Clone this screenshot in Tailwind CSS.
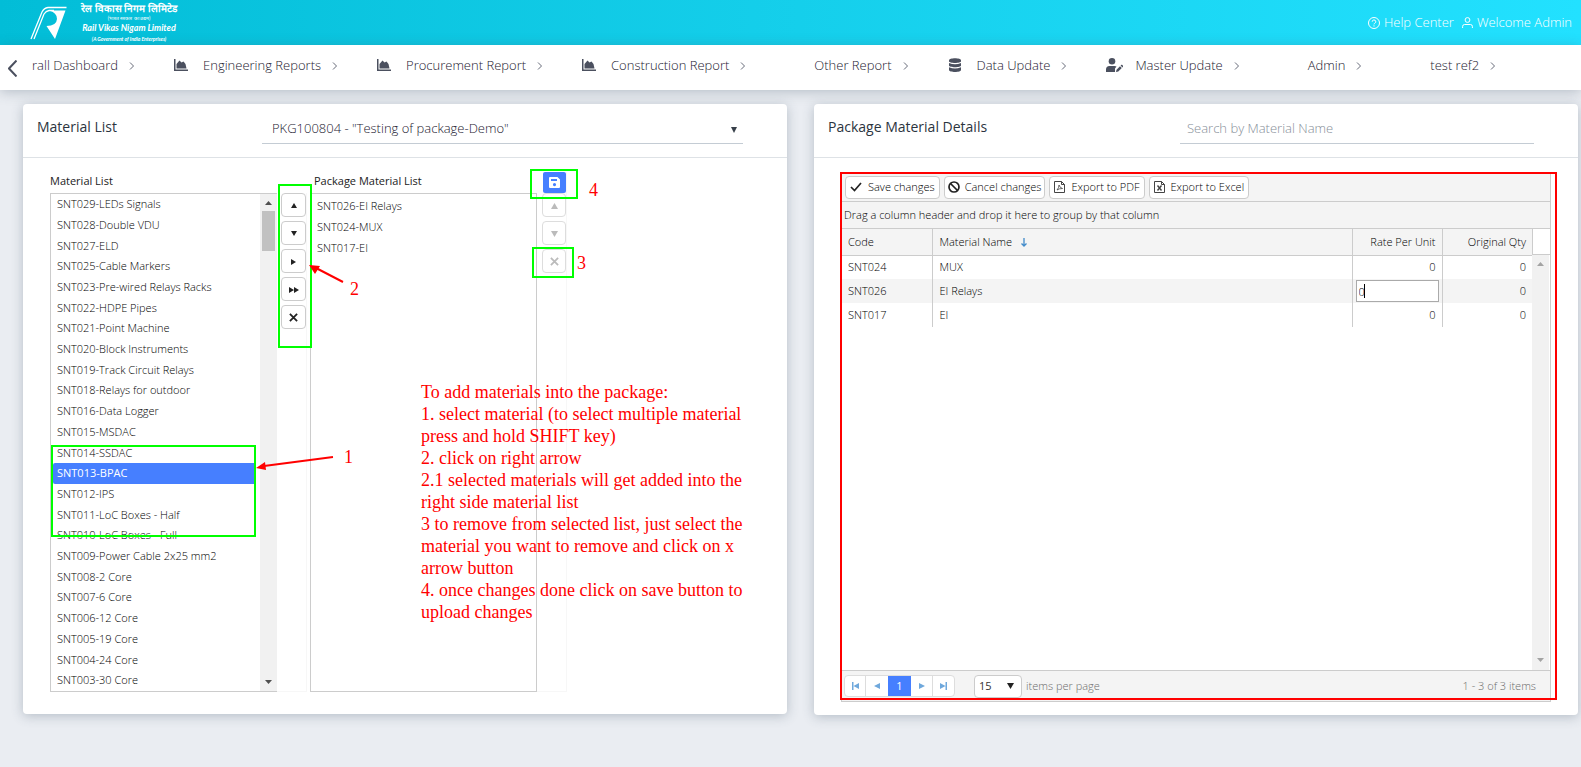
<!DOCTYPE html>
<html lang="en">
<head>
<meta charset="utf-8">
<title>Package Material</title>
<script src="https://cdn.jsdelivr.net/npm/@tailwindcss/browser@4"></script>
</head>
<body class="min-h-screen bg-[#eaedf2] font-['Open_Sans',sans-serif] text-[13px] font-light text-[#37474f]">
<svg class="hidden">
  <symbol id="chart" viewBox="0 0 14 12"><path d="M0 0h1.500v10.500H14V12H0z"/><path d="M2.500 9.500V5l3-3.500 2 2 2-1 2 2.500 1 4.500z"/></symbol>
  <symbol id="chev" viewBox="0 0 6 8"><path d="M1 .5 4.500 4 1 7.500" fill="none" stroke="#666b78" stroke-width="1"/></symbol>
  <symbol id="x" viewBox="0 0 10 10"><path d="m1 1 8 8M9 1 1 9" fill="none" stroke="currentColor" stroke-width="2"/></symbol>
</svg>

<header class="flex h-[45px] items-center justify-between bg-linear-to-r from-[#02bdd7] to-[#22e1ff] pr-[9px] pl-[30px] text-white">
  <a href="#" class="flex items-center gap-[14px]" aria-label="Rail Vikas Nigam Limited">
    <svg class="h-[34px] w-[37px]" viewBox="0 0 37 34" fill="none" stroke="#fff"><path d="M1 33 12 6q2-4 6-4.500h18.500" stroke-width="1.300"/><path d="M4 33 14 8q2-3 5-3.500h5" stroke-width="1.300"/><path d="M19 4.500h16.500L25 33l-8.500-13q10 0 10.500-7 0-6.500-8-8.500z" fill="#fff" stroke="none"/></svg>
    <span class="flex w-[96px] flex-col items-center font-['Lato','Liberation_Sans',sans-serif] font-bold whitespace-nowrap">
      <span class="text-[10px] leading-[14px]">रेल विकास निगम लिमिटेड</span>
      <span class="text-[5px] leading-[6px] font-normal">(भारत सरकार का उद्यम)</span>
      <span class="text-[9px] leading-[14px] italic">Rail Vikas Nigam Limited</span>
      <span class="text-[5px] leading-[9px] italic">(A Government of India Enterprises)</span>
    </span>
  </a>
  <div class="flex items-center gap-2 text-white">
    <a href="#" class="flex items-center gap-1"><svg class="size-3" viewBox="0 0 12 12" fill="none" stroke="currentColor"><circle cx="6" cy="6" r="5.500"/><path d="M4.200 4.700a1.800 1.700 0 1 1 2.600 1.500Q6 6.600 6 7.400M6 8.300v1.200"/></svg>Help Center</a>
    <a href="#" class="flex items-center gap-1"><svg class="size-[11px]" viewBox="0 0 11 11" fill="none" stroke="currentColor"><circle cx="5.500" cy="3" r="2.400"/><path d="M.6 11V9.500q0-2 2-2h5.800q2 0 2 2V11"/></svg>Welcome Admin</a>
  </div>
</header>

<nav class="flex h-[45px] items-center overflow-hidden bg-white pb-[3px] pl-2 whitespace-nowrap text-[#1c2030] shadow-[0_2px_12px_rgba(60,80,100,0.300)]">
  <button aria-label="Scroll left" class="mt-[5px] mr-[15px] text-[#4b505f]"><svg class="h-[17px] w-[9px]" viewBox="0 0 9 17" fill="none" stroke="currentColor" stroke-width="2"><path d="M8.500.5 1 8.500l7.500 8"/></svg></button>
  <div class="flex items-center gap-[39px]">
    <a href="#" class="flex items-center gap-[11px]">rall Dashboard<svg class="h-2 w-[6px]"><use href="#chev"/></svg></a>
    <a href="#" class="flex items-center"><svg class="mr-[15px] mb-[2px] h-3 w-[14px]" fill="#4b505f"><use href="#chart"/></svg>Engineering Reports<svg class="ml-[11px] h-2 w-[6px]"><use href="#chev"/></svg></a>
    <a href="#" class="flex items-center"><svg class="mr-[15px] mb-[2px] h-3 w-[14px]" fill="#4b505f"><use href="#chart"/></svg>Procurement Report<svg class="ml-[11px] h-2 w-[6px]"><use href="#chev"/></svg></a>
    <a href="#" class="flex items-center"><svg class="mr-[15px] mb-[2px] h-3 w-[14px]" fill="#4b505f"><use href="#chart"/></svg>Construction Report<svg class="ml-[11px] h-2 w-[6px]"><use href="#chev"/></svg></a>
    <a href="#" class="flex items-center pl-[29px]">Other Report<svg class="ml-[11px] h-2 w-[6px]"><use href="#chev"/></svg></a>
    <a href="#" class="flex items-center"><svg class="mr-[15px] mb-[2px] h-[14px] w-[14px]" viewBox="0 0 14 14" fill="#4b505f"><path d="M1 2.200C1-.5 13-.5 13 2.200v1C13 5.500 1 5.500 1 3.200z"/><path d="M1 5q6 2.600 12 0v2.600c0 2.200-12 2.200-12 0z"/><path d="M1 9.300q6 2.600 12 0V12c0 2.600-12 2.600-12 0z"/></svg>Data Update<svg class="ml-[11px] h-2 w-[6px]"><use href="#chev"/></svg></a>
    <a href="#" class="flex items-center"><svg class="mr-3 mb-[2px] h-[14px] w-[17px]" viewBox="0 0 17 14" fill="#4b505f"><circle cx="6" cy="3.300" r="3.300"/><path d="M0 14v-2.500Q0 8 3.500 8h5q1.200 0 2 .6L9 10.500V14z"/><path d="m10 14 .5-2.300L14 8.200l1.800 1.800-3.500 3.500zM14.600 7.600l.8-.8q.3-.3.700 0l1 1q.3.400 0 .8l-.7.800z"/></svg>Master Update<svg class="ml-[11px] h-2 w-[6px]"><use href="#chev"/></svg></a>
    <a href="#" class="flex items-center pl-[29px]">Admin<svg class="ml-[11px] h-2 w-[6px]"><use href="#chev"/></svg></a>
    <a href="#" class="flex items-center pl-[29px]">test ref2<svg class="ml-[11px] h-2 w-[6px]"><use href="#chev"/></svg></a>
  </div>
</nav>

<main class="flex items-start gap-[27px] pt-[14px] pr-[3px] pl-[23px]">
  <section class="relative min-w-0 flex-1 rounded bg-white pb-[22px] shadow-[0_2px_12px_rgba(60,80,100,0.300)]">
    <div class="flex h-[54px] items-center justify-between border-b border-[#dee2e6] pr-[44px] pb-1 pl-[14px]">
      <h2 class="pb-1 text-[14px] font-normal text-[#2b343e]">Material List</h2>
      <div class="relative w-[481px]">
        <select aria-label="Package" class="h-[31px] w-full appearance-none border-b border-[#c4ccd4] bg-transparent px-[10px] pt-[2px] text-[13px] text-[#1c2030]"><option>PKG100804 - "Testing of package-Demo"</option></select>
        <svg class="pointer-events-none absolute top-[14px] right-[6px] h-[6px] w-[6px]" viewBox="0 0 8 6" preserveAspectRatio="none" fill="#37404a"><path d="M0 0h8L4 6z"/></svg>
      </div>
    </div>
    <div class="flex pt-[14px] pl-[27px] text-[11px] text-black">
      <div class="w-[227px]">
        <h3 class="h-[21px] text-[11px] leading-[18px] font-normal text-[#222]">Material List</h3>
        <div class="flex h-[499px] border border-r-0 border-[#ccc]">
          <ul id="materials" class="flex flex-1 flex-col pl-[2px]" role="listbox" aria-label="Material List"></ul>
          <div class="ml-1 flex w-[17px] flex-col items-center bg-[#f1f1f1] pt-[7px] pb-[7px]">
            <svg class="h-1 w-[7px]" viewBox="0 0 8 6" preserveAspectRatio="none" fill="#505050"><path d="M4 0 8 6H0z"/></svg>
            <div class="mt-[6px] h-10 w-[13px] bg-[#c1c1c1]"></div>
            <svg class="mt-auto h-1 w-[7px]" viewBox="0 0 8 6" preserveAspectRatio="none" fill="#505050"><path d="M0 0h8L4 6z"/></svg>
          </div>
        </div>
      </div>
      <div class="mt-[21px] mr-[3px] flex w-[30px] flex-col gap-1 border-r border-b border-[#f7f7f7] pl-1">
        <button aria-label="Move up" class="grid h-6 w-[25px] place-items-center rounded border border-[#ccc] bg-white"><svg class="mt-px h-[5px] w-[6px]" viewBox="0 0 8 6" fill="#222" preserveAspectRatio="none"><path d="M4 0 8 6H0z"/></svg></button>
        <button aria-label="Move down" class="grid h-6 w-[25px] place-items-center rounded border border-[#ccc] bg-white"><svg class="mt-px h-[5px] w-[6px]" viewBox="0 0 8 6" fill="#222" preserveAspectRatio="none"><path d="M0 0h8L4 6z"/></svg></button>
        <button aria-label="Add" class="grid h-6 w-[25px] place-items-center rounded border border-[#ccc] bg-white"><svg class="mt-px h-[6px] w-[5px]" viewBox="0 0 5 6" fill="#222"><path d="M0 0 5 3 0 6z"/></svg></button>
        <button aria-label="Add all" class="grid h-6 w-[25px] place-items-center rounded border border-[#ccc] bg-white"><svg class="mt-px h-[6px] w-[10px]" viewBox="0 0 10 6" fill="#222"><path d="M0 0 5 3 0 6zM5 0l5 3-5 3z"/></svg></button>
        <button aria-label="Remove" class="grid h-6 w-[25px] place-items-center rounded border border-[#ccc] bg-white text-[#222]"><svg class="mt-px size-[9px]"><use href="#x"/></svg></button>
      </div>
      <div class="w-[227px]">
        <h3 class="h-[21px] pl-1 text-[11px] leading-[18px] font-normal text-[#222]">Package Material List</h3>
        <ul id="chosen" class="h-[499px] border border-[#ccc] pt-px" role="listbox" aria-label="Package Material List"></ul>
      </div>
      <div class="flex w-[30px] flex-col gap-1 border-r border-b border-[#f7f7f7] pl-[5px]">
        <button aria-label="Save" class="-mb-1 ml-px grid h-[21px] w-[23px] place-items-center rounded-xs bg-[#467fff]"><svg class="size-[11px]" viewBox="0 0 11 11" fill="#fff" fill-rule="evenodd"><path d="M1 0h7.500L11 2.500V10q0 1-1 1H1q-1 0-1-1V1q0-1 1-1zM2 2v2h6V2zM5.500 6a1.600 1.600 0 1 0 0 3.200 1.600 1.600 0 0 0 0-3.200z"/></svg></button>
        <button disabled aria-label="Move up" class="grid h-6 w-6 place-items-center rounded border border-[#ddd] bg-white"><svg class="mt-px h-[6px] w-[7px]" viewBox="0 0 8 6" fill="#bbb" preserveAspectRatio="none"><path d="M4 0 8 6H0z"/></svg></button>
        <button disabled aria-label="Move down" class="grid h-6 w-6 place-items-center rounded border border-[#ddd] bg-white"><svg class="mt-px h-[6px] w-[7px]" viewBox="0 0 8 6" fill="#bbb" preserveAspectRatio="none"><path d="M0 0h8L4 6z"/></svg></button>
        <button disabled aria-label="Remove" class="grid h-6 w-6 place-items-center rounded border border-[#ddd] bg-white text-[#bbb]"><svg class="mt-px size-[9px]"><use href="#x"/></svg></button>
      </div>
    </div>

    <div class="pointer-events-none absolute inset-0 font-['Liberation_Serif',serif] text-[18px] leading-[22px] font-normal text-[#f00]">
      <div class="absolute top-[80px] left-[255px] h-[164px] w-[34px] border-2 border-[#0f0]"></div>
      <div class="absolute top-[65px] left-[507px] h-[30px] w-[48px] border-2 border-[#0f0]"></div>
      <div class="absolute top-[143px] left-[509px] h-[31px] w-[42px] border-2 border-[#0f0]"></div>
      <div class="absolute top-[341px] left-[28px] h-[92px] w-[205px] border-2 border-[#0f0]"></div>
      <svg class="absolute top-0 left-0 h-full w-full" stroke="#f00" fill="#f00" stroke-width="2"><path d="m320 178-27-14M310 353l-69 9"/><path d="m286 161 11 1-5 8zM233 364l9-6 1 8z" stroke="none"/></svg>
      <span class="absolute top-[342px] left-[321px]">1</span>
      <span class="absolute top-[174px] left-[327px]">2</span>
      <span class="absolute top-[148px] left-[554px]">3</span>
      <span class="absolute top-[75px] left-[566px]">4</span>
      <p class="absolute top-[277px] left-[398px] whitespace-nowrap">To add materials into the package:<br>1. select material (to select multiple material<br>press and hold SHIFT key)<br>2. click on right arrow<br>2.1 selected materials will get added into the<br>right side material list<br>3 to remove from selected list, just select the<br>material you want to remove and click on x<br>arrow button<br>4. once changes done click on save button to<br>upload changes</p>
    </div>
  </section>

  <section class="min-w-0 flex-1 rounded bg-white pb-[13px] shadow-[0_2px_12px_rgba(60,80,100,0.300)]">
    <div class="flex h-[54px] items-center justify-between border-b border-[#dee2e6] pr-[44px] pb-1 pl-[14px]">
      <h2 class="pb-1 text-[14px] font-normal text-[#2b343e]">Package Material Details</h2>
      <input type="text" aria-label="Search by Material Name" placeholder="Search by Material Name" class="h-[31px] w-[354px] border-b border-[#c4ccd4] bg-transparent px-[7px] text-[13px] placeholder:text-[#868e98]">
    </div>
    <div class="relative mt-[14px] mr-[27px] ml-[27px] border border-[#ccc] text-[11px] text-black">
      <div class="flex h-[29px] items-center gap-1 border-b border-[#ccc] bg-[#f4f4f4] px-[3px]">
        <button class="flex h-[23px] items-center gap-[6px] rounded border border-[#ccc] bg-white px-1"><svg class="h-[10px] w-3" viewBox="0 0 12 10" fill="none" stroke="#222" stroke-width="1.700"><path d="m1 5 3.500 3.500L11 1"/></svg>Save changes</button>
        <button class="flex h-[23px] items-center gap-[5px] rounded border border-[#ccc] bg-white px-[3px]"><svg class="size-3" viewBox="0 0 12 12" fill="none" stroke="#222" stroke-width="1.700"><circle cx="6" cy="6" r="5"/><path d="m2.500 2.500 7 7"/></svg>Cancel changes</button>
        <button class="flex h-[23px] items-center gap-[6px] rounded border border-[#ccc] bg-white px-1"><svg class="h-3 w-[11px]" viewBox="0 0 11 12" fill="none" stroke="#444"><path d="M.5.500h7l3 3v8H.5zM7.500.5v3h3"/><path d="M3 9q2-2 2-5 1 3 3.500 3.500Q5 7.500 3 9" stroke-width=".8"/></svg>Export to PDF</button>
        <button class="flex h-[23px] items-center gap-[6px] rounded border border-[#ccc] bg-white px-1"><svg class="h-3 w-[11px]" viewBox="0 0 11 12" fill="none" stroke="#444"><path d="M.5.500h7l3 3v8H.5zM7.500.5v3h3"/><path d="m3.500 4.500 4 5M7.500 4.500l-4 5" stroke-width="1.400"/></svg>Export to Excel</button>
      </div>
      <div class="flex h-[27px] items-center border-b border-[#ccc] bg-[#f4f4f4] pl-[2px]">Drag a column header and drop it here to group by that column</div>
      <div class="flex h-[441px]">
        <div class="min-w-0 flex-1">
          <table class="w-full table-fixed border-collapse">
            <thead>
              <tr class="h-[26px] border-b border-[#ccc] bg-[#f4f4f4] text-left">
                <th class="w-[90px] border-r border-[#ccc] px-[6px] font-light">Code</th>
                <th class="border-r border-[#ccc] px-[7px] font-light">Material Name <svg class="ml-[6px] inline h-[9px] w-[6px]" viewBox="0 0 6 9" fill="none" stroke="#428bca" stroke-width="1.300"><path d="M3 0v8M.5 5.500 3 8l2.500-2.500"/></svg></th>
                <th class="w-[90px] border-r border-[#ccc] px-[6px] text-right font-light">Rate Per Unit</th>
                <th class="w-[90px] px-[6px] text-right font-light">Original Qty</th>
              </tr>
            </thead>
            <tbody>
              <tr class="h-6"><td class="border-r border-[#ccc] px-[6px]">SNT024</td><td class="border-r border-[#ccc] px-[7px]">MUX</td><td class="border-r border-[#ccc] px-[6px] text-right">0</td><td class="px-[6px] text-right">0</td></tr>
              <tr class="h-6 bg-[#f4f4f4]"><td class="border-r border-[#ccc] px-[6px]">SNT026</td><td class="border-r border-[#ccc] px-[7px]">EI Relays</td><td class="border-r border-[#ccc] px-[3px]"><div class="relative"><input type="text" aria-label="Rate Per Unit" value="0" class="block h-[22px] w-full border border-[#aaa] bg-white px-[2px]"><span class="absolute top-1 left-2 h-[14px] w-px bg-black"></span></div></td><td class="px-[6px] text-right">0</td></tr>
              <tr class="h-6"><td class="border-r border-[#ccc] px-[6px]">SNT017</td><td class="border-r border-[#ccc] px-[7px]">EI</td><td class="border-r border-[#ccc] px-[6px] text-right">0</td><td class="px-[6px] text-right">0</td></tr>
            </tbody>
          </table>
        </div>
        <div class="flex w-[18px] flex-col">
          <div class="h-[26px] border-b border-l border-[#ccc]"></div>
          <div class="mr-px flex flex-1 flex-col items-center justify-between bg-[#f1f1f1] pt-[7px] pb-2">
            <svg class="h-1 w-[7px]" viewBox="0 0 8 6" preserveAspectRatio="none" fill="#a3a3a3"><path d="M4 0 8 6H0z"/></svg>
            <svg class="h-1 w-[7px]" viewBox="0 0 8 6" preserveAspectRatio="none" fill="#a3a3a3"><path d="M0 0h8L4 6z"/></svg>
          </div>
        </div>
      </div>
      <div class="flex h-[31px] items-center border-t border-[#ccc] bg-[#f4f4f4] pr-[14px] pl-[2px] text-[#6c6c6c]">
        <div class="flex h-[22px] overflow-hidden rounded border border-[#ddd] bg-white text-[#6fa8dc]">
          <button aria-label="First page" class="grid w-[21px] place-items-center border-r border-[#ddd]"><svg class="h-2 w-[7px]" viewBox="0 0 7 8" fill="currentColor"><path d="M0 0h1.500v8H0zM7 1v6L1.500 4z"/></svg></button>
          <button aria-label="Previous page" class="grid w-[22px] place-items-center"><svg class="h-[6px] w-[6px]" viewBox="0 0 6 6" fill="currentColor"><path d="M6 0v6L0 3z"/></svg></button>
          <button class="grid w-[23px] place-items-center bg-[#467fff] font-normal text-white">1</button>
          <button aria-label="Next page" class="grid w-[22px] place-items-center border-r border-[#ddd]"><svg class="h-[6px] w-[6px]" viewBox="0 0 6 6" fill="currentColor"><path d="M0 0v6l6-3z"/></svg></button>
          <button aria-label="Last page" class="grid w-[21px] place-items-center"><svg class="h-2 w-[7px]" viewBox="0 0 7 8" fill="currentColor"><path d="M7 0H5.500v8H7zM0 1v6l5.500-3z"/></svg></button>
        </div>
        <div class="relative ml-[19px]">
          <select id="size" class="h-[23px] w-[48px] appearance-none rounded border border-[#ccc] bg-white px-1 text-[11px] font-normal text-[#333]"><option>15</option></select>
          <svg class="pointer-events-none absolute top-2 right-2 h-[6px] w-[7px]" viewBox="0 0 8 6" preserveAspectRatio="none" fill="#222"><path d="M0 0h8L4 6z"/></svg>
        </div>
        <label for="size" class="ml-1">items per page</label>
        <span class="ml-auto">1 - 3 of 3 items</span>
      </div>
      <div class="pointer-events-none absolute -top-px -right-[7px] bottom-px -left-[2px] border-2 border-[#f00]"></div>
    </div>
  </section>
</main>
<script>
const materials = ["SNT029-LEDs Signals","SNT028-Double VDU","SNT027-ELD","SNT025-Cable Markers","SNT023-Pre-wired Relays Racks","SNT022-HDPE Pipes","SNT021-Point Machine","SNT020-Block Instruments","SNT019-Track Circuit Relays","SNT018-Relays for outdoor","SNT016-Data Logger","SNT015-MSDAC","SNT014-SSDAC","SNT013-BPAC","SNT012-IPS","SNT011-LoC Boxes - Half","SNT010-LoC Boxes - Full","SNT009-Power Cable 2x25 mm2","SNT008-2 Core","SNT007-6 Core","SNT006-12 Core","SNT005-19 Core","SNT004-24 Core","SNT003-30 Core"];
document.getElementById("materials").innerHTML = materials.map(m => `<li role="option" class="flex flex-1 items-center rounded-xs pl-1 ${m === "SNT013-BPAC" ? "bg-[#467fff] font-normal text-white" : ""}">${m}</li>`).join("");
document.getElementById("chosen").innerHTML = ["SNT026-EI Relays","SNT024-MUX","SNT017-EI"].map(m => `<li role="option" class="pl-[6px] leading-[21px]">${m}</li>`).join("");
</script>
</body>
</html>
